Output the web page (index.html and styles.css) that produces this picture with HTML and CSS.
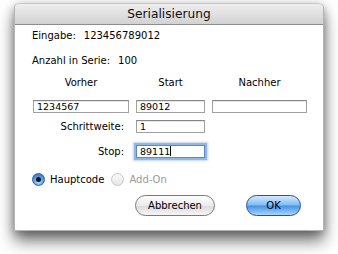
FILE: index.html
```html
<!DOCTYPE html>
<html lang="de">
<head>
<meta charset="utf-8">
<title>Serialisierung</title>
<link rel="stylesheet" href="styles.css">
</head>
<body>
<div class="stage">
  <div class="window">
    <div class="titlebar">Serialisierung</div>
    <div class="content">
      <div class="info"><span class="lbl">Eingabe:</span><span>123456789012</span></div>
      <div class="info second"><span class="lbl">Anzahl in Serie:</span><span>100</span></div>
      <div class="grid">
        <div class="head">Vorher</div>
        <div class="head">Start</div>
        <div class="head">Nachher</div>
        <div class="field">1234567</div>
        <div class="field">89012</div>
        <div class="field"></div>
        <div class="rlabel">Schrittweite:</div>
        <div class="field">1</div>
        <div></div>
        <div class="rlabel stoplbl">Stop:</div>
        <div class="field focus">89111<span class="caret"></span></div>
        <div></div>
      </div>
      <div class="radios">
        <span class="radio on"></span><span class="rtext">Hauptcode</span>
        <span class="radio off"></span><span class="rtext dim">Add-On</span>
      </div>
      <div class="buttons">
        <div class="btn cancel">Abbrechen</div>
        <div class="btn ok">OK</div>
      </div>
    </div>
  </div>
</div>
</body>
</html>
```
FILE: styles.css
```css
html, body {
  margin: 0;
  padding: 0;
  background: #ffffff;
}
body {
  width: 338px;
  height: 254px;
  overflow: hidden;
  font-family: "DejaVu Sans", "Liberation Sans", sans-serif;
  font-size: 10px;
  color: #000;
}
.stage {
  padding: 3px 14px 0 14px;
}
.window {
  width: 310px;
  height: 228px;
  box-sizing: border-box;
  background: #fff;
  border: 1px solid #b4b4b4;
  border-top: none;
  border-radius: 5px 5px 0 0;
  box-shadow: 0 10px 16px rgba(0,0,0,0.55), 0 2px 8px rgba(0,0,0,0.25);
  overflow: hidden;
}
.titlebar {
  height: 20px;
  line-height: 21px;
  text-align: center;
  font-size: 12.2px;
  color: #111;
  background: linear-gradient(#eeeeee, #d2d2d2);
  border-bottom: 1px solid #8c8c8c;
  border-top: 1px solid #c9c9c9;
  border-radius: 5px 5px 0 0;
}
.content {
  padding: 4px 0 0 17px;
}
.info {
  height: 14px;
  line-height: 14px;
}
.info .lbl {
  margin-right: 8px;
}
.info.second {
  margin-top: 11px;
}
.grid {
  margin-top: 8px;
  margin-left: 1px;
  display: grid;
  grid-template-columns: 96px 69px 95px;
  column-gap: 7px;
}
.head {
  text-align: center;
  height: 14px;
  line-height: 14px;
  margin-bottom: 10px;
}
.field {
  box-sizing: border-box;
  height: 13px;
  border: 1px solid #a0a0a0;
  border-top-color: #858585;
  box-shadow: inset 0 1px 0 #e6e6e6;
  padding: 0 3px;
  font-size: 9.5px;
  line-height: 12px;
  margin-bottom: 7px;
  background: #fff;
}
.rlabel {
  text-align: right;
  padding-right: 5px;
  line-height: 13px;
}
.stoplbl {
  padding-top: 5px;
}
.field.focus {
  border-color: #5f86bd;
  box-shadow: 0 0 0 2px #94b7e2, 0 0 2px 3px rgba(120,160,215,0.45);
  margin-top: 5px;
}
.caret {
  display: inline-block;
  width: 1px;
  height: 10px;
  background: #000;
  vertical-align: -1px;
}
.radios {
  margin-top: 8px;
  display: flex;
  align-items: center;
  height: 13px;
}
.radio {
  box-sizing: border-box;
  width: 13px;
  height: 13px;
  border-radius: 50%;
  position: relative;
  flex: none;
}
.radio.on {
  background: radial-gradient(circle at 50% 72%, #b8ddff 0%, #5aa0ea 50%, #2c62b3 100%);
  border: 1px solid #34589a;
}
.radio.on::after {
  content: "";
  position: absolute;
  left: 3px;
  top: 3px;
  width: 5px;
  height: 5px;
  border-radius: 50%;
  background: #111;
}
.radio.off {
  background: linear-gradient(#f8f8f8, #e8e8e8);
  border: 1px solid #c6c6c6;
  margin-left: 7px;
}
.rtext {
  margin-left: 5px;
}
.rtext.dim {
  color: #9a9a9a;
}
.buttons {
  margin-top: 9px;
  display: flex;
  padding-left: 103px;
}
.btn {
  box-sizing: border-box;
  height: 21px;
  line-height: 19px;
  text-align: center;
  border-radius: 11px;
}
.cancel {
  width: 80px;
  border: 1px solid #7a7a7a;
  background: linear-gradient(#fdfdfd 0%, #ececec 50%, #dadada 52%, #f6f6f6 100%);
}
.ok {
  width: 55px;
  margin-left: 31px;
  border: 1px solid #2d4f9a;
  background: linear-gradient(#d3e9ff 0%, #80bcf4 48%, #4492e6 52%, #a6d5ff 100%);
}
```
